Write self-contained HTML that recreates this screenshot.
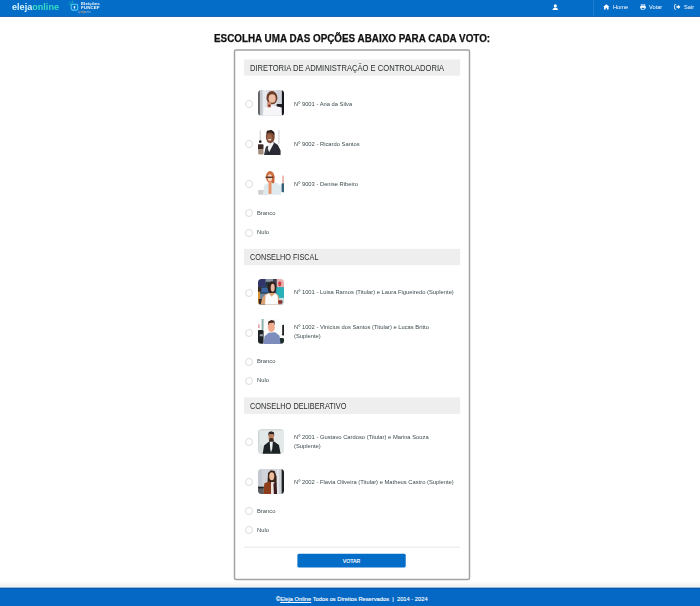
<!DOCTYPE html>
<html lang="pt-BR">
<head>
<meta charset="utf-8">
<title>Eleja Online - Votar</title>
<style>
html,body{margin:0;padding:0;}
body{width:700px;height:606px;position:relative;overflow:hidden;background:#fff;font-family:"Liberation Sans",sans-serif;color:#36474a;}
.abs{position:absolute;white-space:nowrap;}
#ftxt{left:1.8px;width:700px;text-align:center;top:595px;font-size:5.76px;line-height:9px;color:#fff;-webkit-text-stroke:0.12px #fff;}
#ftxt u{text-decoration:underline;}
#title{left:213.8px;top:32.2px;line-height:13px;font-size:10.2px;font-weight:bold;color:#111;transform-origin:0 0;transform:scaleX(0.968);-webkit-text-stroke:0.25px #111;}
.sect{left:249.6px;font-size:8.3px;line-height:16.5px;color:#2a2d2f;transform-origin:0 0;margin-top:0.1px;}
.radio{left:245px;width:8px;height:8px;border:1px solid #dcdcdc;border-radius:50%;box-sizing:border-box;background:#fff;}
.ph{left:258px;width:26.3px;height:25.6px;border-radius:3.5px;overflow:hidden;}
.ph svg{display:block;width:26.3px;height:25.6px;}
.ct{left:293.6px;font-size:5.8px;line-height:9px;color:#3d4c50;will-change:transform;}
.bt{left:256.8px;font-size:5.8px;line-height:9px;color:#3d4c50;will-change:transform;}
#btn{left:297.5px;top:553.7px;width:108px;height:14px;color:#fff;font-size:5.2px;line-height:14px;text-align:center;-webkit-text-stroke:0.15px #fff;}
.nav{color:#fff;font-size:5.8px;line-height:15px;top:0;transform-origin:0 0;transform:scaleX(0.98);}
</style>
</head>
<body>
<svg class="abs" id="bg" style="left:0;top:0" width="700" height="606" viewBox="0 0 700 606">
<defs><linearGradient id="fsh" x1="0" y1="0" x2="0" y2="1"><stop offset="0" stop-color="#ffffff"/><stop offset="1" stop-color="#ededea"/></linearGradient></defs>
<rect x="0" y="0" width="700" height="16.200" fill="#046dc8"/>
<rect x="0" y="16.100" width="700" height="0.900" fill="#0a57a6"/>
<rect x="0" y="581" width="700" height="7" fill="url(#fsh)"/>
<rect x="0" y="587.800" width="700" height="18.200" fill="#0468c4"/>
<rect x="0" y="587.800" width="700" height="1.200" fill="#0759b0"/>
<rect x="234.500" y="50" width="235" height="529.500" rx="1.500" fill="#fff" stroke="#a2a2a5" stroke-width="1.500"/>
<rect x="243.900" y="59.500" width="216.300" height="16.200" fill="#eeeeee"/>
<rect x="243.900" y="248.800" width="216.300" height="16.400" fill="#eeeeee"/>
<rect x="243.900" y="397.400" width="216.300" height="16.500" fill="#eeeeee"/>
<rect x="243.900" y="546.700" width="216.300" height="0.900" fill="#e3e3e3"/>
<rect x="297.400" y="553.700" width="108.300" height="13.800" rx="1.500" fill="#046dc8"/>
</svg>
<div class="abs" id="logo" style="left:12px;top:2.200px;font-size:8.200px;line-height:11px;font-weight:bold;color:#d6f3ff;letter-spacing:0;transform:scaleX(1.11);transform-origin:0 0;">eleja<span style="color:#35dcc4">online</span></div>
<svg class="abs" style="left:66px;top:0" width="14" height="14" viewBox="0 0 14 14"><rect x="5.200" y="4.300" width="6.600" height="5.800" rx="1.600" fill="none" stroke="#4fcdf5" stroke-width="1.100"/><rect x="7.800" y="5.900" width="1.400" height="2.600" rx="0.600" fill="#ffffff"/><path d="M2.600 3.800 L4.600 4.800 M4.200 1.600 L5.400 3.600 M6.600 1 L6.800 2.800" stroke="#2edca4" stroke-width="0.600" opacity="0.85" stroke-linecap="round"/></svg>
<div class="abs" id="logo2" style="left:81px;top:2.800px;font-size:3.700px;line-height:3.900px;font-weight:bold;color:#f2fbff;letter-spacing:0.100px;transform:scaleX(1.2);transform-origin:0 0;">Eleições<br>FUNCEF</div>
<div class="abs" id="logo3" style="left:78px;top:10.900px;font-size:2.600px;line-height:3px;font-weight:bold;color:#7fa8d4;transform:scaleX(0.74);transform-origin:0 0;">by <span style="color:#c8a070">eleja</span>online</div>
<div class="abs" style="left:592.8px;top:0;width:1px;height:16px;background:#1f7cd2;"></div>
<svg class="abs" style="left:552.300px;top:3.800px" width="6.600" height="6.600" viewBox="0 0 14 14"><circle cx="7" cy="4" r="3.3" fill="#fff"/><path d="M1 14 C1 9.5 3.5 8 7 8 C10.500 8 13 9.500 13 14 Z" fill="#fff"/></svg>
<svg class="abs" style="left:602.6px;top:4.2px" width="6.600" height="5.800" viewBox="0 0 16 14"><path d="M8 0.500 L0.500 7 L2.500 7 L2.500 13.500 L6.500 13.500 L6.500 9 L9.500 9 L9.500 13.500 L13.500 13.500 L13.500 7 L15.500 7 Z" fill="#fff"/></svg>
<div class="abs nav" style="left:613px;">Home</div>
<svg class="abs" style="left:640px;top:4.200px" width="6" height="6" viewBox="0 0 14 14"><path d="M3 0.500 H11 V4 H3 Z" fill="none" stroke="#fff" stroke-width="1.600"/><rect x="0.500" y="4.500" width="13" height="6" rx="1.200" fill="#fff"/><rect x="3.200" y="8.200" width="7.600" height="4.800" fill="#046dc8" stroke="#fff" stroke-width="1.400"/></svg>
<div class="abs nav" style="left:649px;">Votar</div>
<svg class="abs" style="left:674px;top:4.300px" width="6.600" height="5.800" viewBox="0 0 16 14"><path d="M5.500 1.500 H2.500 Q1 1.500 1 3 V11 Q1 12.500 2.500 12.500 H5.500" fill="none" stroke="#fff" stroke-width="2"/><path d="M6 5 H10 V2 L15.500 7 L10 12 V9 H6 Z" fill="#fff"/></svg>
<div class="abs nav" style="left:683.6px;">Sair</div>

<div class="abs" id="title">ESCOLHA UMA DAS OPÇÕES ABAIXO PARA CADA VOTO:</div>


<div class="abs sect" id="s1" style="top:59.5px;transform:scaleX(0.9158)">DIRETORIA DE ADMINISTRAÇÃO E CONTROLADORIA</div>
<div class="abs radio" style="top:100.0px"></div>
<div class="abs ph" style="top:90.3px"><svg viewBox="0 0 26 26" preserveAspectRatio="none"><use href="#p1"/></svg></div>
<div class="abs ct" id="c1" style="top:100.0px">Nº 9001 - Ana da Silva</div>
<div class="abs radio" style="top:140.0px"></div>
<div class="abs ph" style="top:130.3px"><svg viewBox="0 0 26 26" preserveAspectRatio="none"><use href="#p2"/></svg></div>
<div class="abs ct" id="c2" style="top:140.0px">Nº 9002 - Ricardo Santos</div>
<div class="abs radio" style="top:180.0px"></div>
<div class="abs ph" style="top:170.3px"><svg viewBox="0 0 26 26" preserveAspectRatio="none"><use href="#p3"/></svg></div>
<div class="abs ct" id="c3" style="top:180.0px">Nº 9003 - Denise Ribeiro</div>
<div class="abs radio" style="top:209.3px"></div>
<div class="abs bt" style="top:208.5px">Branco</div>
<div class="abs radio" style="top:228.5px"></div>
<div class="abs bt" style="top:227.7px">Nulo</div>
<div class="abs sect" id="s2" style="top:249px;transform:scaleX(0.8783)">CONSELHO FISCAL</div>
<div class="abs radio" style="top:289.0px"></div>
<div class="abs ph" style="top:279px"><svg viewBox="0 0 26 26" preserveAspectRatio="none"><use href="#p4"/></svg></div>
<div class="abs ct" id="c4" style="top:288.2px">Nº 1001 - Luisa Ramos (Titular) e Laura Figueiredo (Suplente)</div>
<div class="abs radio" style="top:328.5px"></div>
<div class="abs ph" style="top:318.5px"><svg viewBox="0 0 26 26" preserveAspectRatio="none"><use href="#p5"/></svg></div>
<div class="abs ct" id="c5" style="top:323.2px">Nº 1002 - Vinicius dos Santos (Titular) e Lucas Britto<br>(Suplente)</div>
<div class="abs radio" style="top:358.0px"></div>
<div class="abs bt" style="top:357.2px">Branco</div>
<div class="abs radio" style="top:377.0px"></div>
<div class="abs bt" style="top:376.2px">Nulo</div>
<div class="abs sect" id="s3" style="top:397.5px;transform:scaleX(0.8876)">CONSELHO DELIBERATIVO</div>
<div class="abs radio" style="top:438.4px"></div>
<div class="abs ph" style="top:428.8px"><svg viewBox="0 0 26 26" preserveAspectRatio="none"><use href="#p6"/></svg></div>
<div class="abs ct" id="c6" style="top:433.1px">Nº 2001 - Gustavo Cardoso (Titular) e Marina Souza<br>(Suplente)</div>
<div class="abs radio" style="top:477.6px"></div>
<div class="abs ph" style="top:468.8px"><svg viewBox="0 0 26 26" preserveAspectRatio="none"><use href="#p7"/></svg></div>
<div class="abs ct" id="c7" style="top:477.6px">Nº 2002 - Flavia Oliveira (Titular) e Matheus Castro (Suplente)</div>
<div class="abs radio" style="top:507.4px"></div>
<div class="abs bt" style="top:506.6px">Branco</div>
<div class="abs radio" style="top:526.4px"></div>
<div class="abs bt" style="top:525.6px">Nulo</div>
<div class="abs" id="btn">VOTAR</div>
<div class="abs" id="ftxt"><span id="ft">©<u>Eleja Online</u> Todos os Direitos Reservados &nbsp;|&nbsp; 2014 - 2024</span></div>

<svg width="0" height="0" style="position:absolute">
<defs>
<filter id="bl" x="-5%" y="-5%" width="110%" height="110%"><feGaussianBlur stdDeviation="0.65"/></filter>
<g id="p1" filter="url(#bl)"><rect width="26" height="26" fill="#d9dde2"/><rect x="0.07" y="-0.01" width="1.83" height="25.71" rx="0" fill="#5a5a5e"/><rect x="1.9" y="-0.01" width="2.74" height="25.71" rx="0" fill="#c4c8ce"/><rect x="4.64" y="-0.01" width="4.0" height="25.71" rx="0" fill="#e6e9ee"/><rect x="18.93" y="-0.01" width="4.57" height="25.71" rx="0" fill="#cfd3d9"/><rect x="23.61" y="-0.01" width="3.31" height="25.71" rx="0" fill="#17181a"/><ellipse cx="13.79" cy="7.84" rx="5.43" ry="6.71" fill="#6e3e2a"/><ellipse cx="13.99" cy="8.55" rx="3.52" ry="4.29" fill="#ecbfa6"/><rect x="18.36" y="14.27" width="5.71" height="3.43" rx="0.8" fill="#1d1f22"/><polygon points="4.93,25.7 6.07,17.99 12.64,15.13 22.36,17.41 23.21,25.7" fill="#f6f6f8"/><rect x="9.1" y="12.27" width="3.83" height="5.43" rx="0.8" fill="#cf9076"/><ellipse cx="11.21" cy="15.98" rx="1.15" ry="1.15" fill="#7a2a2c"/></g>
<g id="p2" filter="url(#bl)"><rect width="26" height="26" fill="#ffffff"/><rect x="1.46" y="0.08" width="1.58" height="10.82" rx="0" fill="#dcdcde"/><rect x="19.68" y="0.08" width="1.85" height="13.99" rx="0" fill="#e2e2e4"/><ellipse cx="2.25" cy="11.82" rx="1.32" ry="1.45" fill="#2a2224"/><rect x="-0.12" y="14.6" width="5.54" height="5.28" rx="1" fill="#3a2a28"/><rect x="0.14" y="19.35" width="5.28" height="5.54" rx="0.5" fill="#a58e80"/><ellipse cx="12.16" cy="7.07" rx="4.36" ry="6.47" fill="#7b4a34"/><ellipse cx="11.36" cy="7.73" rx="2.51" ry="3.69" fill="#9a6246"/><ellipse cx="11.62" cy="9.84" rx="1.72" ry="0.79" fill="#f0e6e0"/><polygon points="8.06,4.04 8.85,0.87 13.34,0.08 15.98,1.92 16.51,5.09 13.34,2.45 10.17,2.45" fill="#2a1a16"/><polygon points="5.95,25.42 7.53,17.76 14.92,11.96 19.68,15.12 22.32,20.93 22.32,25.42" fill="#2b2c34"/><polygon points="8.85,15.92 14.92,11.96 15.72,13.54 10.96,22.52" fill="#f4f4f6"/><polygon points="8.32,16.44 10.17,15.92 9.38,20.4 7.8,25.16 6.74,25.16" fill="#3c4048"/></g>
<g id="p3" filter="url(#bl)"><rect width="26" height="26" fill="#ffffff"/><rect x="0.14" y="20.4" width="11.09" height="4.75" rx="0.5" fill="#cfd0d2"/><polygon points="4.89,25.16 6.21,15.12 11.23,13.01 18.62,13.01 22.84,16.18 22.84,25.16" fill="#dfeaee"/><ellipse cx="12.02" cy="7.07" rx="4.22" ry="5.94" fill="#cd6f40"/><rect x="13.6" y="5.62" width="2.64" height="7.92" rx="1" fill="#c8683a"/><ellipse cx="11.76" cy="7.99" rx="2.22" ry="3.69" fill="#f5d3c0"/><rect x="7.43" y="6.57" width="7.6" height="1.48" rx="0.5" fill="#5a3528"/><rect x="10.44" y="11.43" width="2.9" height="12.94" rx="1" fill="#e9936c"/><rect x="23.79" y="5.62" width="2.53" height="8.18" rx="1" fill="#f0b9b0"/><rect x="23.27" y="13.54" width="2.85" height="8.98" rx="1" fill="#35607a"/></g>
<g id="p4" filter="url(#bl)"><rect width="26" height="26" fill="#6f869c"/><rect x="-0.12" y="-0.1" width="7.92" height="8.18" rx="0" fill="#33356a"/><rect x="7.53" y="-0.1" width="11.09" height="3.43" rx="0" fill="#8a96a8"/><rect x="7.8" y="2.81" width="3.7" height="5.02" rx="0" fill="#1e3a38"/><rect x="14.92" y="-0.1" width="3.7" height="8.18" rx="0" fill="#3a3c50"/><rect x="18.62" y="-0.1" width="7.39" height="8.45" rx="0" fill="#e9b0ae"/><ellipse cx="21.53" cy="4.92" rx="1.58" ry="2.64" fill="#cf3e40"/><rect x="-0.12" y="7.82" width="18.74" height="7.13" rx="0" fill="#2c4668"/><rect x="2.78" y="9.14" width="7.13" height="4.22" rx="0" fill="#3a68a4"/><rect x="18.09" y="8.35" width="7.92" height="11.35" rx="0" fill="#2ab0b8"/><rect x="18.62" y="19.18" width="7.39" height="6.6" rx="0" fill="#c4dede"/><rect x="-0.12" y="12.31" width="2.11" height="13.46" rx="0" fill="#dc922c"/><rect x="-0.12" y="8.35" width="3.43" height="4.49" rx="0" fill="#3a2a20"/><rect x="0.67" y="20.23" width="6.86" height="5.54" rx="0" fill="#3a2a20"/><ellipse cx="13.74" cy="8.48" rx="4.36" ry="6.21" fill="#33201c"/><ellipse cx="14.53" cy="8.88" rx="1.98" ry="3.96" fill="#e9b8a0"/><polygon points="2.78,25.78 4.1,19.18 7.27,15.48 10.7,14.16 17.04,14.16 19.94,16.54 22.32,25.78" fill="#dba578"/><polygon points="7.0,25.78 7.53,16.54 10.7,14.42 13.34,18.12 17.04,14.42 19.41,17.06 19.94,25.78" fill="#fbfbfb"/><rect x="19.94" y="21.55" width="4.22" height="3.7" rx="1" fill="#8a3030"/></g>
<g id="p5" filter="url(#bl)"><rect width="26" height="26" fill="#fbfcfc"/><rect x="3.57" y="-0.12" width="1.95" height="11.09" rx="0" fill="#8fb3ab"/><rect x="-0.12" y="5.42" width="1.74" height="3.7" rx="0" fill="#e9a4ac"/><rect x="-0.12" y="11.12" width="5.65" height="14.1" rx="1" fill="#1a2028"/><rect x="1.72" y="15.45" width="3.17" height="2.11" rx="0" fill="#9a9ea6"/><rect x="23.9" y="5.95" width="2.22" height="9.5" rx="1" fill="#202224"/><ellipse cx="24.88" cy="15.71" rx="1.4" ry="1.05" fill="#202224"/><rect x="20.73" y="19.41" width="5.02" height="5.81" rx="1.5" fill="#1c2c2a"/><polygon points="5.42,25.48 6.48,17.56 10.7,13.87 17.04,13.34 21.26,17.04 22.32,25.48" fill="#7c8cbc"/><ellipse cx="13.18" cy="8.32" rx="3.43" ry="5.01" fill="#f1ab8c"/><polygon points="9.91,6.48 10.17,2.52 13.34,0.93 16.24,1.72 16.77,6.48 15.45,3.84 11.49,4.1" fill="#4a2a20"/></g>
<g id="p6" filter="url(#bl)"><rect width="26" height="26" fill="#e3e8e8"/><rect x="-0.12" y="0.1" width="1.58" height="25.87" rx="0" fill="#cfd6d6"/><rect x="-0.12" y="0.1" width="26.14" height="1.32" rx="0" fill="#d4dada"/><rect x="0.67" y="16.21" width="3.7" height="9.77" rx="0" fill="#d8dede"/><ellipse cx="13.08" cy="8.02" rx="2.64" ry="5.01" fill="#b9805e"/><polygon points="10.17,7.23 10.44,3.54 12.81,2.22 15.72,3.27 16.09,7.23 14.92,5.12 11.49,5.12" fill="#2a2422"/><ellipse cx="13.21" cy="11.32" rx="2.25" ry="2.25" fill="#3a2a24"/><polygon points="4.63,25.18 5.95,16.74 10.96,12.78 15.98,12.78 20.73,16.21 22.32,25.18" fill="#1c2426"/><polygon points="11.65,13.04 14.66,13.04 14.13,19.9 12.81,23.86 12.02,19.9" fill="#e9eff1"/></g>
<g id="p7" filter="url(#bl)"><rect width="26" height="26" fill="#d0d3da"/><rect x="-0.12" y="-0.16" width="3.96" height="25.87" rx="0" fill="#c4c8d0"/><rect x="18.62" y="-0.16" width="2.11" height="25.87" rx="0" fill="#e2e4ea"/><rect x="23.37" y="-0.16" width="2.9" height="25.87" rx="0" fill="#1e2022"/><rect x="-0.12" y="18.06" width="5.81" height="7.66" rx="0" fill="#5a5c60"/><rect x="-0.12" y="18.06" width="5.81" height="1.58" rx="0" fill="#222426"/><polygon points="9.38,14.62 9.91,4.06 12.81,1.16 16.51,1.95 18.36,7.76 18.36,14.89" fill="#3a2018"/><ellipse cx="13.6" cy="7.36" rx="2.48" ry="4.09" fill="#ebbc9e"/><polygon points="5.42,25.71 6.21,14.62 10.7,12.51 13.34,14.1 13.34,25.71" fill="#8d3e1e"/><rect x="12.92" y="13.3" width="3.17" height="12.41" rx="0" fill="#f1e6e6"/><polygon points="15.19,14.62 18.36,14.1 18.88,25.71 15.72,25.71" fill="#3a1a1c"/></g>
</defs>
</svg>

</body>
</html>
